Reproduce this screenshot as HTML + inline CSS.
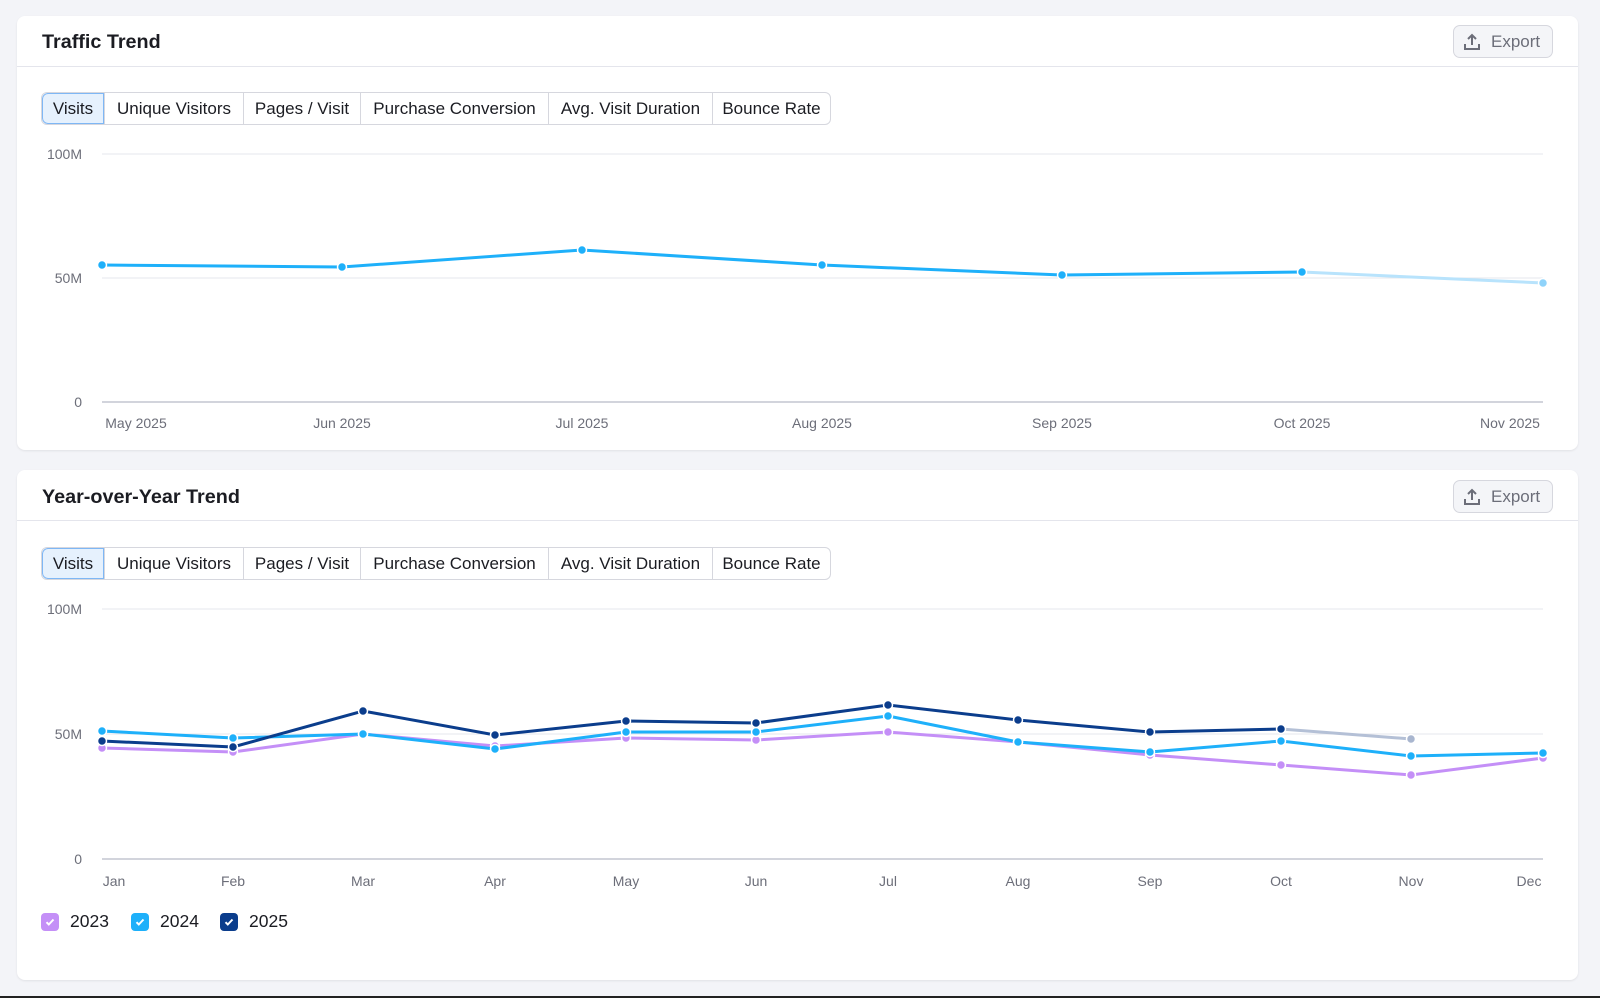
<!DOCTYPE html>
<html><head><meta charset="utf-8"><style>
*{box-sizing:border-box;margin:0;padding:0}
body{width:1600px;height:998px;background:#f3f4f8;font-family:"Liberation Sans",sans-serif;position:relative;overflow:hidden}
.card{position:absolute;left:17px;width:1561px;background:#fff;border-radius:8px;box-shadow:0 1px 2px rgba(0,0,0,.08)}
.hd{position:absolute;left:0;right:0;top:0;border-bottom:1px solid #e4e5ec}
.title{position:absolute;left:25px;font-weight:bold;font-size:19.8px;color:#1b1c22}
.exp{position:absolute;left:1436px;width:100px;height:33px;border:1px solid #d6d7de;border-radius:7px;background:#f4f5f8;color:#6c6e79;font-size:17px;display:flex;align-items:center;padding-left:9px;gap:10px}
.tabs{position:absolute;left:24px;height:33px;display:flex;border:1px solid #d6d7de;border-radius:6px;overflow:hidden}
.tabs div{font-size:17px;color:#1b1c22;display:flex;align-items:center;justify-content:center;border-left:1px solid #d6d7de}
.tabs div:nth-child(1){width:62px;border-left:none;background:#e6f1fd;border:1px solid #7eb7f5;border-radius:6px 0 0 6px}
.tabs div:nth-child(2){width:139px}
.tabs div:nth-child(3){width:117px}
.tabs div:nth-child(4){width:188px}
.tabs div:nth-child(5){width:164px}
.tabs div:nth-child(6){width:118px}
svg{position:absolute;left:0;top:0}
.ax{font-size:14px;fill:#6c6e79;font-family:"Liberation Sans",sans-serif}
.leg{position:absolute;top:911px;display:flex;align-items:center;gap:11px;font-size:17.5px;color:#1b1c22}
.cb{width:18px;height:18px;border-radius:4px;display:flex;align-items:center;justify-content:center}
</style></head><body>
<div class="card" style="top:16px;height:434px">
 <div class="hd" style="height:51px"></div>
 <div class="title" style="top:15px">Traffic Trend</div>
 <div class="exp" style="top:9px"><svg style="position:static" width="18" height="18" viewBox="0 0 18 18" fill="none" stroke="#6c6e79" stroke-width="2"><path d="M9 12V2M5 6l4-4 4 4M2 11v5h14v-5"/></svg>Export</div>
 <div class="tabs" style="top:76px"><div>Visits</div><div>Unique Visitors</div><div>Pages / Visit</div><div>Purchase Conversion</div><div>Avg. Visit Duration</div><div>Bounce Rate</div></div>
</div>
<div class="card" style="top:470px;height:510px">
 <div class="hd" style="height:51px"></div>
 <div class="title" style="top:16px">Year-over-Year Trend</div>
 <div class="exp" style="top:10px"><svg style="position:static" width="18" height="18" viewBox="0 0 18 18" fill="none" stroke="#6c6e79" stroke-width="2"><path d="M9 12V2M5 6l4-4 4 4M2 11v5h14v-5"/></svg>Export</div>
 <div class="tabs" style="top:77px"><div>Visits</div><div>Unique Visitors</div><div>Pages / Visit</div><div>Purchase Conversion</div><div>Avg. Visit Duration</div><div>Bounce Rate</div></div>
</div>
<svg width="1600" height="998">
 <g stroke="#e6e7ec" stroke-width="1"><line x1="102" y1="154" x2="1543" y2="154"/><line x1="102" y1="278" x2="1543" y2="278"/><line x1="102" y1="609" x2="1543" y2="609"/><line x1="102" y1="734" x2="1543" y2="734"/></g>
 <g stroke="#c4c6d0" stroke-width="1.5"><line x1="102" y1="402" x2="1543" y2="402"/><line x1="102" y1="859" x2="1543" y2="859"/></g>
 <g class="ax" text-anchor="end"><text x="82" y="159">100M</text><text x="82" y="283">50M</text><text x="82" y="407">0</text><text x="82" y="614">100M</text><text x="82" y="739">50M</text><text x="82" y="864">0</text></g>
 <g class="ax" text-anchor="middle"><text x="136" y="428">May 2025</text><text x="342" y="428">Jun 2025</text><text x="582" y="428">Jul 2025</text><text x="822" y="428">Aug 2025</text><text x="1062" y="428">Sep 2025</text><text x="1302" y="428">Oct 2025</text><text x="1510" y="428">Nov 2025</text></g>
 <g class="ax" text-anchor="middle"><text x="114" y="886">Jan</text><text x="233" y="886">Feb</text><text x="363" y="886">Mar</text><text x="495" y="886">Apr</text><text x="626" y="886">May</text><text x="756" y="886">Jun</text><text x="888" y="886">Jul</text><text x="1018" y="886">Aug</text><text x="1150" y="886">Sep</text><text x="1281" y="886">Oct</text><text x="1411" y="886">Nov</text><text x="1529" y="886">Dec</text></g>
 <polyline fill="none" stroke="#1eb0fa" stroke-width="3" points="102,265 342,267 582,250 822,265 1062,275 1302,272"/>
 <line x1="1302" y1="272" x2="1543" y2="283" stroke="#b8e3fc" stroke-width="3"/>
 <g fill="#1eb0fa" stroke="#fff" stroke-width="1.5"><circle cx="102" cy="265" r="4.5"/><circle cx="342" cy="267" r="4.5"/><circle cx="582" cy="250" r="4.5"/><circle cx="822" cy="265" r="4.5"/><circle cx="1062" cy="275" r="4.5"/><circle cx="1302" cy="272" r="4.5"/><circle cx="1543" cy="283" r="4.5" fill="#8fd3fa"/></g>
 <polyline fill="none" stroke="#c48ff7" stroke-width="3" points="102,748 233,752 363,734 495,746 626,738 756,740 888,732 1018,742 1150,755 1281,765 1411,775 1543,758"/>
 <polyline fill="none" stroke="#1eb0fa" stroke-width="3" points="102,731 233,738 363,734 495,749 626,732 756,732 888,716 1018,742 1150,752 1281,741 1411,756 1543,753"/>
 <polyline fill="none" stroke="#0b3d8c" stroke-width="3" points="102,741 233,747 363,711 495,735 626,721 756,723 888,705 1018,720 1150,732 1281,729"/>
 <line x1="1281" y1="729" x2="1411" y2="739" stroke="#b4c0d6" stroke-width="3"/>
 <g stroke="#fff" stroke-width="1.5">
 <g fill="#c48ff7"><circle cx="102" cy="748" r="4.5"/><circle cx="233" cy="752" r="4.5"/><circle cx="363" cy="734" r="4.5"/><circle cx="495" cy="746" r="4.5"/><circle cx="626" cy="738" r="4.5"/><circle cx="756" cy="740" r="4.5"/><circle cx="888" cy="732" r="4.5"/><circle cx="1018" cy="742" r="4.5"/><circle cx="1150" cy="755" r="4.5"/><circle cx="1281" cy="765" r="4.5"/><circle cx="1411" cy="775" r="4.5"/><circle cx="1543" cy="758" r="4.5"/></g>
 <g fill="#1eb0fa"><circle cx="102" cy="731" r="4.5"/><circle cx="233" cy="738" r="4.5"/><circle cx="363" cy="734" r="4.5"/><circle cx="495" cy="749" r="4.5"/><circle cx="626" cy="732" r="4.5"/><circle cx="756" cy="732" r="4.5"/><circle cx="888" cy="716" r="4.5"/><circle cx="1018" cy="742" r="4.5"/><circle cx="1150" cy="752" r="4.5"/><circle cx="1281" cy="741" r="4.5"/><circle cx="1411" cy="756" r="4.5"/><circle cx="1543" cy="753" r="4.5"/></g>
 <g fill="#0b3d8c"><circle cx="102" cy="741" r="4.5"/><circle cx="233" cy="747" r="4.5"/><circle cx="363" cy="711" r="4.5"/><circle cx="495" cy="735" r="4.5"/><circle cx="626" cy="721" r="4.5"/><circle cx="756" cy="723" r="4.5"/><circle cx="888" cy="705" r="4.5"/><circle cx="1018" cy="720" r="4.5"/><circle cx="1150" cy="732" r="4.5"/><circle cx="1281" cy="729" r="4.5"/><circle cx="1411" cy="739" r="4.5" fill="#a9b6cf"/></g>
 </g>
 <rect x="0" y="996" width="1600" height="2" fill="#222"/>
</svg>
<div class="leg" style="left:41px"><div class="cb" style="background:#c48ff7"><svg style="position:static" width="12" height="12" viewBox="0 0 12 12"><path d="M2.5 6.2l2.3 2.3 4.7-5" fill="none" stroke="#fff" stroke-width="2"/></svg></div>2023</div>
<div class="leg" style="left:131px"><div class="cb" style="background:#1eb0fa"><svg style="position:static" width="12" height="12" viewBox="0 0 12 12"><path d="M2.5 6.2l2.3 2.3 4.7-5" fill="none" stroke="#fff" stroke-width="2"/></svg></div>2024</div>
<div class="leg" style="left:220px"><div class="cb" style="background:#0b3d8c"><svg style="position:static" width="12" height="12" viewBox="0 0 12 12"><path d="M2.5 6.2l2.3 2.3 4.7-5" fill="none" stroke="#fff" stroke-width="2"/></svg></div>2025</div>
</body></html>
